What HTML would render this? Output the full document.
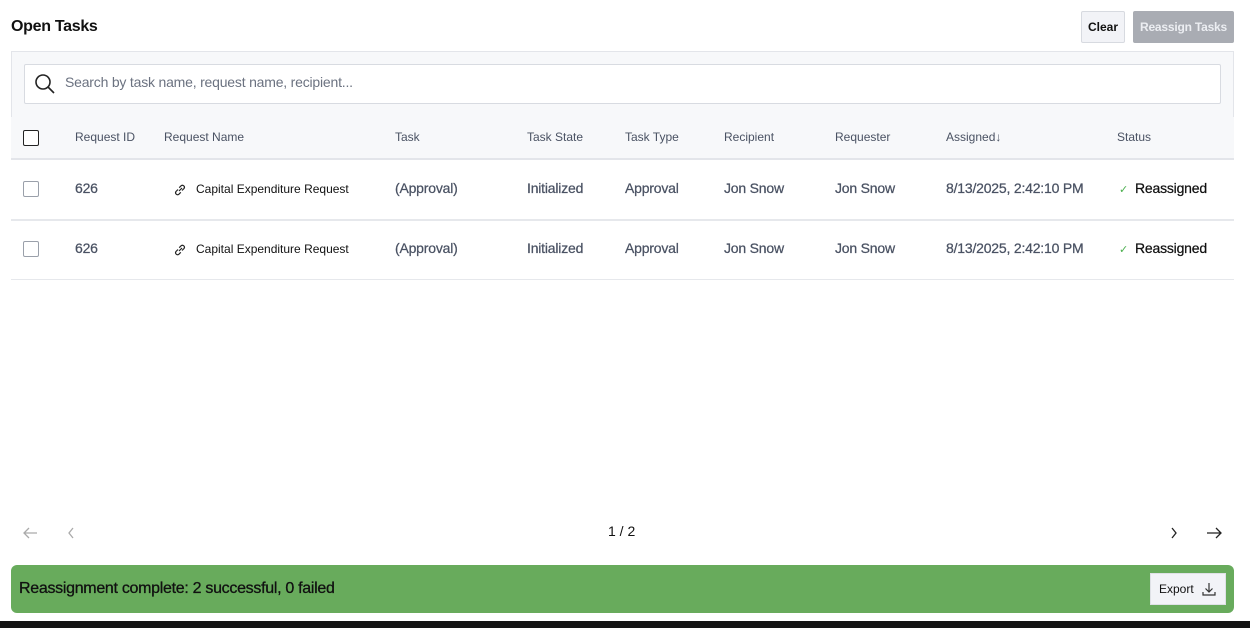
<!DOCTYPE html>
<html><head><style>
*{box-sizing:border-box;margin:0;padding:0}
body{width:1250px;height:628px;background:#fff;font-family:"Liberation Sans",sans-serif;position:relative;overflow:hidden;color:#4a5263}
.a{position:absolute;white-space:nowrap}
.h{font-size:12px;top:130px;color:#4a5263}
.r{font-size:14px;color:#4a5263;letter-spacing:-0.2px;-webkit-text-stroke:0.25px currentColor}
.cb{position:absolute;width:16px;height:16px;border:1px solid #9aa0aa;border-radius:2px;background:#fff}
</style></head><body>
<div class="a" style="left:11px;top:18px;font-size:16px;font-weight:bold;color:#111;letter-spacing:-0.3px">Open Tasks</div>
<div class="a" style="left:1081px;top:11px;width:44px;height:32px;border:1px solid #d7dae0;background:#f2f3f7;border-radius:2px;font-size:12px;font-weight:bold;color:#111;text-align:center;line-height:30px">Clear</div>
<div class="a" style="left:1133px;top:11px;width:101px;height:32px;background:#a9acb3;border-radius:2px;font-size:12px;font-weight:bold;color:#eceef2;text-align:center;line-height:32px;letter-spacing:-0.2px">Reassign Tasks</div>
<div class="a" style="left:11px;top:51px;width:1223px;height:67px;background:#f7f8fa;border:1px solid #e3e5ea;border-bottom:none"></div>
<div class="a" style="left:24px;top:64px;width:1197px;height:40px;background:#fff;border:1px solid #d8dbe1;border-radius:2px"></div>
<svg class="a" style="left:33px;top:72px" width="24" height="24" viewBox="0 0 24 24"><circle cx="10" cy="10" r="7" fill="none" stroke="#222" stroke-width="1.6"/><path d="M15 15l6 6" stroke="#222" stroke-width="1.6"/></svg>
<div class="a" style="left:65px;top:74px;font-size:14px;color:#6b7280;letter-spacing:-0.2px">Search by task name, request name, recipient...</div>
<div class="a" style="left:11px;top:117px;width:1223px;height:43px;background:#f7f8fa;border-bottom:2px solid #e3e5ea"></div>
<div class="cb" style="left:23px;top:130px;border-color:#222;border-width:1.5px"></div>
<div class="a h" style="left:75px">Request ID</div>
<div class="a h" style="left:164px">Request Name</div>
<div class="a h" style="left:395px">Task</div>
<div class="a h" style="left:527px">Task State</div>
<div class="a h" style="left:625px">Task Type</div>
<div class="a h" style="left:724px">Recipient</div>
<div class="a h" style="left:835px">Requester</div>
<div class="a h" style="left:946px">Assigned↓</div>
<div class="a h" style="left:1117px">Status</div>

<div class="a" style="left:11px;top:219px;width:1223px;height:2px;background:#e6e8ec"></div>
<div class="a" style="left:11px;top:279px;width:1223px;height:1px;background:#e6e8ec"></div>

<div class="cb" style="left:23px;top:181px"></div>
<div class="a r" style="left:75px;top:180px">626</div>
<svg class="a" style="left:173px;top:183px" width="14" height="14" viewBox="0 0 14 14" fill="none" stroke="#222" stroke-width="1.2"><path d="M6 8l3-3M5 6.5L3 8.5a2 2 0 0 0 2.8 2.8L7.8 9.3M9 7.5l2-2a2 2 0 0 0-2.8-2.8L6.2 4.7"/></svg>
<div class="a" style="left:196px;top:182px;font-size:12px;color:#111">Capital Expenditure Request</div>
<div class="a r" style="left:395px;top:180px">(Approval)</div>
<div class="a r" style="left:527px;top:180px">Initialized</div>
<div class="a r" style="left:625px;top:180px">Approval</div>
<div class="a r" style="left:724px;top:180px">Jon Snow</div>
<div class="a r" style="left:835px;top:180px">Jon Snow</div>
<div class="a r" style="left:946px;top:180px">8/13/2025, 2:42:10 PM</div>
<div class="a" style="left:1119px;top:183px;color:#4caf50;font-size:11px">✓</div>
<div class="a r" style="left:1135px;top:180px;color:#111">Reassigned</div>

<div class="cb" style="left:23px;top:241px"></div>
<div class="a r" style="left:75px;top:240px">626</div>
<svg class="a" style="left:173px;top:243px" width="14" height="14" viewBox="0 0 14 14" fill="none" stroke="#222" stroke-width="1.2"><path d="M6 8l3-3M5 6.5L3 8.5a2 2 0 0 0 2.8 2.8L7.8 9.3M9 7.5l2-2a2 2 0 0 0-2.8-2.8L6.2 4.7"/></svg>
<div class="a" style="left:196px;top:242px;font-size:12px;color:#111">Capital Expenditure Request</div>
<div class="a r" style="left:395px;top:240px">(Approval)</div>
<div class="a r" style="left:527px;top:240px">Initialized</div>
<div class="a r" style="left:625px;top:240px">Approval</div>
<div class="a r" style="left:724px;top:240px">Jon Snow</div>
<div class="a r" style="left:835px;top:240px">Jon Snow</div>
<div class="a r" style="left:946px;top:240px">8/13/2025, 2:42:10 PM</div>
<div class="a" style="left:1119px;top:243px;color:#4caf50;font-size:11px">✓</div>
<div class="a r" style="left:1135px;top:240px;color:#111">Reassigned</div>

<svg class="a" style="left:22px;top:525px" width="18" height="16" viewBox="0 0 18 16" fill="none" stroke="#aaa" stroke-width="1.3"><path d="M15 8H2M7 3L2 8l5 5"/></svg>
<svg class="a" style="left:65px;top:525px" width="12" height="16" viewBox="0 0 12 16" fill="none" stroke="#aaa" stroke-width="1.3"><path d="M8 3L4 8l4 5"/></svg>
<div class="a" style="left:608px;top:523px;font-size:14px;color:#111">1 / 2</div>
<svg class="a" style="left:1168px;top:525px" width="12" height="16" viewBox="0 0 12 16" fill="none" stroke="#222" stroke-width="1.3"><path d="M4 3l4 5-4 5"/></svg>
<svg class="a" style="left:1205px;top:525px" width="18" height="16" viewBox="0 0 18 16" fill="none" stroke="#222" stroke-width="1.3"><path d="M2 8h13M11 3l5 5-5 5"/></svg>

<div class="a" style="left:11px;top:565px;width:1223px;height:48px;background:#68ab5c;border-radius:6px"></div>
<div class="a" style="left:19px;top:580px;font-size:16px;color:#111;letter-spacing:-0.3px;-webkit-text-stroke:0.3px #111">Reassignment complete: 2 successful, 0 failed</div>
<div class="a" style="left:1150px;top:573px;width:76px;height:32px;background:#f2f3f7;border:1px solid #dfe1e6;font-size:12px;color:#111;line-height:30px;padding-left:8px">Export</div>
<svg class="a" style="left:1201px;top:581px" width="16" height="16" viewBox="0 0 16 16" fill="none" stroke="#333" stroke-width="1.2"><path d="M8 2v9M4.5 7.5L8 11l3.5-3.5M2 11v3h12v-3"/></svg>
<div class="a" style="left:0;top:621px;width:1250px;height:7px;background:#141414"></div>
</body></html>
